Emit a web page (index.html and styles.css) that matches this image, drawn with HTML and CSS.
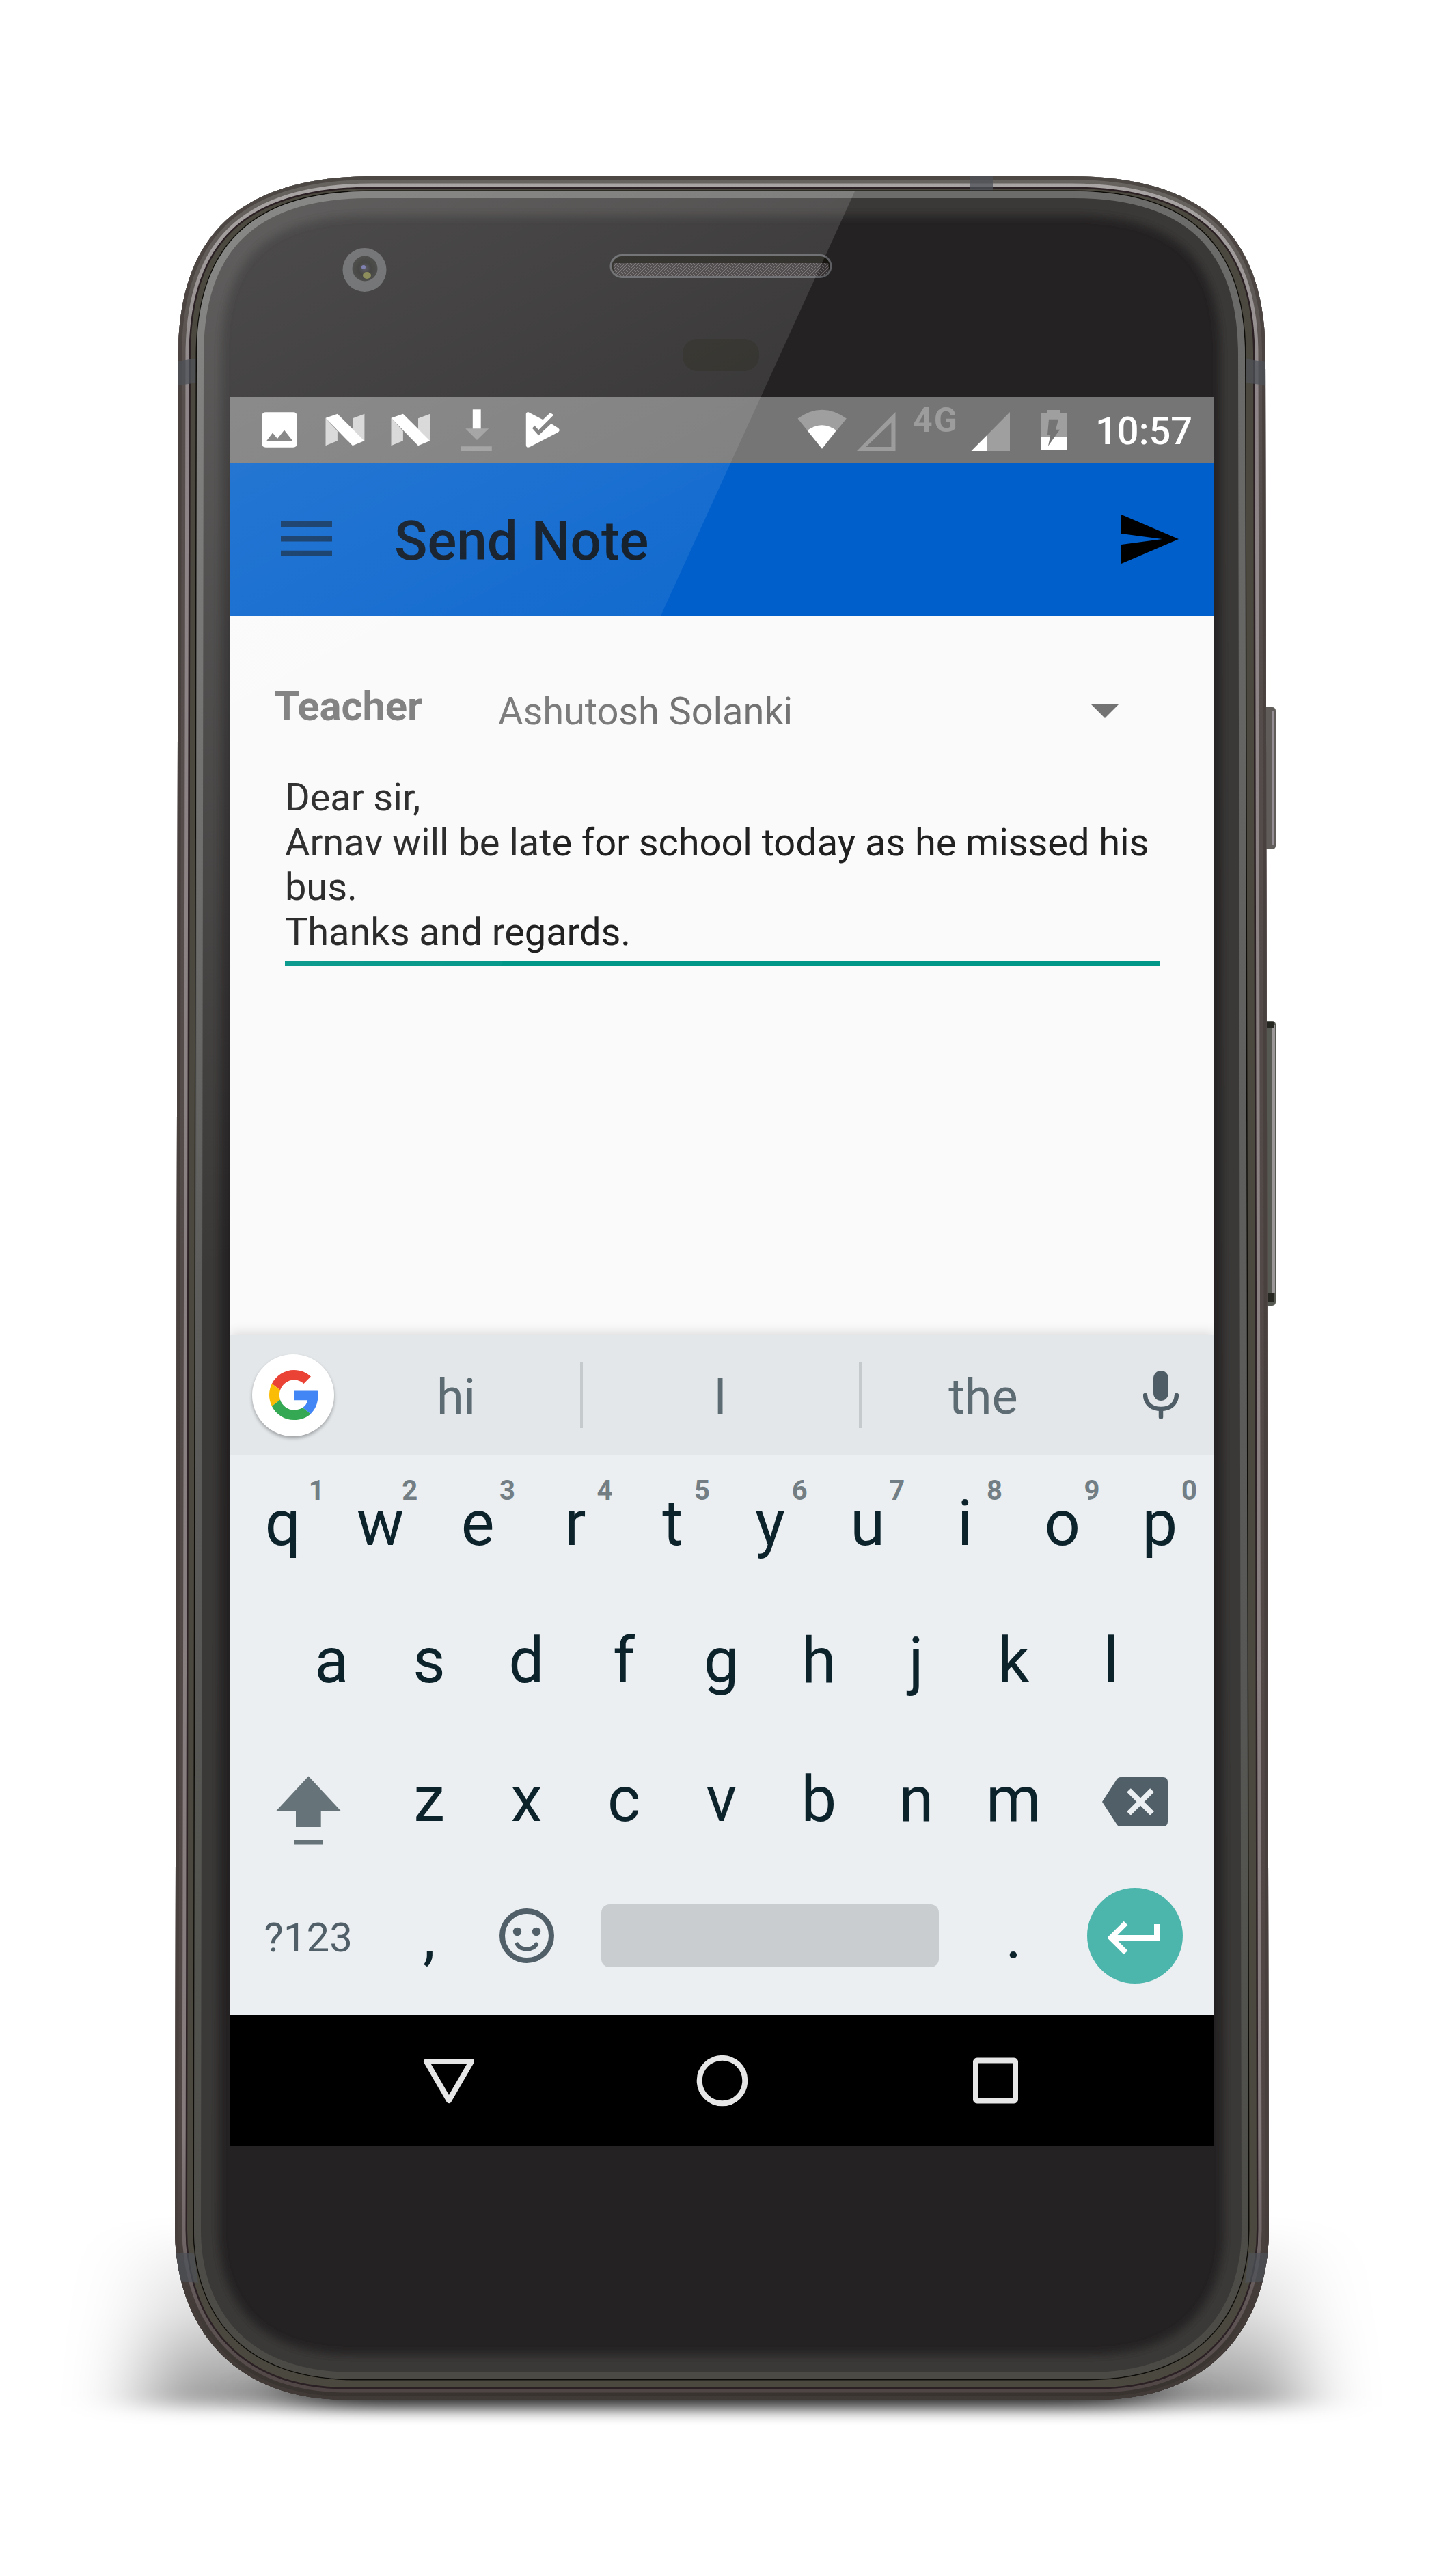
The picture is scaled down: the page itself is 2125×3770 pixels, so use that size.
FILE: index.html
```html
<!DOCTYPE html>
<html lang="en">
<head>
<meta charset="utf-8">
<title>Send Note</title>
<link rel="stylesheet" href="styles.css">
</head>
<body>
<div class="stage">
  <svg class="device" viewBox="0 0 2125 3770" aria-hidden="true">
    <defs>
      <path id="outer" d="M261 520C261 350 345 258 545 258H1568C1768 258 1852 350 1852 520L1857 3263C1857 3385 1790 3512 1605 3512H508C323 3512 256 3385 256 3263Z"/>
      <path id="glass" d="M288 520C288 380 350 280 540 280H1571C1761 280 1822 380 1822 520L1827 3263C1827 3370 1771 3482 1591 3482H520C340 3482 284 3370 284 3263Z"/>
      <clipPath id="outerClip"><use href="#outer"/></clipPath>
      <clipPath id="glassClip"><use href="#glass"/></clipPath>
      <filter id="wide" x="-20%" y="-60%" width="140%" height="220%"><feGaussianBlur stdDeviation="56 12"/></filter>
      <filter id="near" x="-20%" y="-200%" width="140%" height="500%"><feGaussianBlur stdDeviation="60 12"/></filter>
      <filter id="soft" x="-5%" y="-5%" width="110%" height="110%"><feGaussianBlur stdDeviation="7"/></filter>
      <linearGradient id="shade" x1="0" y1="0" x2="0" y2="1"><stop offset="0" stop-opacity="0"/><stop offset=".5" stop-opacity=".14"/><stop offset="1" stop-opacity=".42"/></linearGradient>
      <linearGradient id="ridge" x1="0" y1="0" x2="0" y2="1"><stop offset="0" stop-color="#6c6c6a"/><stop offset=".6" stop-color="#5a5b59"/><stop offset="1" stop-color="#4b4a45"/></linearGradient>
      <linearGradient id="rim" x1="0" y1="0" x2="0" y2="1"><stop offset="0" stop-color="#aaa6a5"/><stop offset=".1" stop-color="#8d8587"/><stop offset=".88" stop-color="#857b7c"/><stop offset="1" stop-color="#4e4444"/></linearGradient>
      <linearGradient id="edge" x1="0" y1="0" x2="0" y2="1"><stop offset="0" stop-color="#67635f"/><stop offset=".1" stop-color="#564e4c"/><stop offset=".9" stop-color="#4f4644"/><stop offset="1" stop-color="#38332e"/></linearGradient>
      <radialGradient id="lens"><stop offset="0" stop-color="#3d3c48"/><stop offset=".5" stop-color="#22221f"/><stop offset="1" stop-color="#2c2c2a"/></radialGradient>
      <pattern id="mesh" width="4" height="4" patternUnits="userSpaceOnUse"><rect width="4" height="4" fill="#3a3536"/><path d="M0 4L4 0" stroke="#6b6566"/></pattern>
    </defs>
    <rect x="215" y="3250" width="1683" height="272" fill="url(#shade)" filter="url(#wide)"/>
    <rect x="440" y="3480" width="1233" height="42" fill="#000" opacity=".75" filter="url(#near)"/>
    <g>
      <rect x="1848" y="1035" width="19" height="208" rx="5" fill="#5f5c5a"/>
      <rect x="1861" y="1040" width="4" height="196" fill="#958e95"/>
      <rect x="1848" y="1494" width="19" height="417" rx="5" fill="#565852"/>
      <rect x="1862" y="1500" width="4" height="392" fill="#9b9799"/>
      <path d="M1853 1496h12v9h-12zM1853 1893h12v12h-12z" fill="#24261f"/>
    </g>
    <g clip-path="url(#outerClip)">
      <use href="#outer" fill="#4b483f"/>
      <use href="#outer" fill="none" stroke="#2b2023" stroke-width="36"/>
      <use href="#outer" fill="none" stroke="url(#rim)" stroke-width="31"/>
      <use href="#outer" fill="none" stroke="url(#edge)" stroke-width="21"/>
      <use href="#outer" fill="none" stroke="#453d3b" stroke-opacity=".7" stroke-width="10"/>
      <g fill="#4d5258" opacity=".75">
        <path d="M255 530l34-6v36l-34 5zM1821 525l40 6v34l-40-5zM1420 255h33v26h-33zM250 3297h34l6 44-40-4zM1864 3297h-36l-6 44 42-4z"/>
      </g>
    </g>
    <use href="#glass" fill="#242222" stroke="#0d0c08" stroke-width="3"/>
    <g clip-path="url(#glassClip)">
      <use href="#glass" fill="none" stroke="#3a3937" stroke-width="72" filter="url(#soft)"/>
      <use href="#glass" fill="none" stroke="url(#ridge)" stroke-width="20"/>
    </g>
    <circle cx="533.5" cy="395" r="32" fill="#5b5c5e"/>
    <circle cx="534" cy="393" r="18.5" fill="url(#lens)"/>
    <circle cx="532" cy="391" r="3" fill="#6668a0"/>
    <ellipse cx="537" cy="403" rx="6" ry="5" fill="#77783c"/>
    <rect x="894" y="373.500" width="322" height="32" rx="16" fill="#17150f" stroke="#5d5e61" stroke-width="3"/>
    <path d="M898 385H1212Q1216 404 1200 404H910Q896 404 898 385Z" fill="url(#mesh)"/>
    <rect x="999" y="496" width="112" height="47" rx="22" fill="#1e1d18"/>
  </svg>

  <main class="screen">
    <header class="status">
      <svg class="st-photo" viewBox="383 594 52 70"><path fill="#fff" fill-rule="evenodd" d="M389 603.300H429Q434.700 603.300 434.700 609V649Q434.700 654.700 429 654.700H389Q383.300 654.700 383.300 649V609Q383.300 603.300 389 603.300ZM389.500 646H429L416 629.500 406 642 399 633.500Z"/></svg>
      <svg class="st-n" viewBox="476 594 58 70"><path fill="#d4d4d4" d="M476.500 611.700L493.900 631V645L476.500 652.300ZM516 612.300L533.400 605.700V645L516 628Z"/><path fill="#fff" d="M476.500 611.700L493.900 605.700 533.400 645 516 652.300Z"/></svg>
      <svg class="st-n st-n2" viewBox="476 594 58 70"><path fill="#d4d4d4" d="M476.500 611.700L493.900 631V645L476.500 652.300ZM516 612.300L533.400 605.700V645L516 628Z"/><path fill="#fff" d="M476.500 611.700L493.900 605.700 533.400 645 516 652.300Z"/></svg>
      <svg class="st-dl" viewBox="674 594 46 70"><path fill="#999" d="M681.200 627.300H715.200L698 644ZM674.800 653.300H719.800V660H674.800Z"/><path fill="#fff" d="M691.800 599.300H703.700V627.300H691.800Z"/></svg>
      <svg class="st-play" viewBox="769 594 51 70"><path fill="#fff" d="M769.800 606Q770 602.500 773.500 603.300L794.600 614.300 805.200 604 810.300 607.300 788.200 629.300 782.300 622.700 779 626.700 788.200 637.300 806.600 620 817 626.500Q820.500 629.300 817 632.500L775.500 654Q770 656.500 769.800 651Z"/></svg>
      <svg class="st-wifi" viewBox="1167 594 72 70"><path fill="#9f9f9f" d="M1167.500 612.500Q1203 587 1238.800 612.500L1203 656.700Z"/><path fill="#fff" d="M1181.500 630Q1203 614.500 1223.900 630L1203 656.700Z"/></svg>
      <svg class="st-sig" viewBox="1253 594 58 70"><path fill="#9c9c9c" fill-rule="evenodd" d="M1310.500 603V660H1254ZM1304.400 618.500L1267.500 654H1304.400Z"/></svg>
      <span class="st-net">4G</span>
      <svg class="st-sig2" viewBox="1421 594 58 70"><path fill="#9f9f9f" d="M1478 603V660H1421.500Z"/><path fill="#fff" d="M1445 636.400V660H1421.500Z"/></svg>
      <svg class="st-bat" viewBox="1523 594 39 70"><path fill="#9f9f9f" d="M1533 600H1551.500V605H1561V640H1523.700V605H1533Z"/><path fill="#fff" d="M1523.700 640H1561V658.600H1523.700Z"/><path fill="#747474" d="M1535 613.700H1549L1545 628.700H1551L1534 652.700 1537.500 636H1533Z"/></svg>
      <span class="st-time">10:57</span>
    </header>

    <nav class="appbar">
      <svg class="menu" viewBox="0 0 75 51"><path d="M0 0H75V8H0ZM0 21.400H75V29.400H0ZM0 42.700H75V50.700H0Z"/></svg>
      <h1 class="title">Send Note</h1>
      <svg class="send" viewBox="0 0 24 24"><path d="M2.010 21L23 12 2.010 3 2 10l15 2-15 2z"/></svg>
    </nav>

    <section class="content">
      <div class="recipient">
        <span class="label">Teacher</span>
        <span class="value">Ashutosh Solanki</span>
        <svg class="caret" viewBox="0 0 40 20"><path d="M0 0H40L20 20Z"/></svg>
      </div>
      <div class="note">Dear sir,<br>Arnav will be late for school today as he missed his<br>bus.<br>Thanks and regards.</div>
    </section>

    <section class="keyboard">
      <div class="suggest">
        <span class="google"><svg viewBox="0 0 48 48"><path fill="#EA4335" d="M24 9.500c3.540 0 6.710 1.220 9.210 3.600l6.850-6.850C35.900 2.380 30.470 0 24 0 14.620 0 6.510 5.380 2.560 13.220l7.980 6.190C12.430 13.720 17.740 9.500 24 9.500z"/><path fill="#4285F4" d="M46.980 24.550c0-1.570-.15-3.090-.38-4.550H24v9.020h12.940c-.58 2.960-2.260 5.480-4.780 7.180l7.730 6c4.510-4.180 7.090-10.360 7.090-17.650z"/><path fill="#FBBC05" d="M10.530 28.590c-.48-1.450-.76-2.990-.76-4.590s.27-3.140.76-4.590l-7.980-6.190C.92 16.460 0 20.120 0 24c0 3.880.92 7.540 2.560 10.780l7.970-6.190z"/><path fill="#34A853" d="M24 48c6.480 0 11.930-2.130 15.890-5.810l-7.730-6c-2.150 1.450-4.920 2.300-8.160 2.300-6.260 0-11.570-4.220-13.470-9.910l-7.980 6.190C6.510 42.620 14.620 48 24 48z"/></svg></span>
        <span class="word w1">hi</span><i class="sep"></i>
        <span class="word w2">I</span><i class="sep"></i>
        <span class="word w3">the</span>
        <svg class="mic" viewBox="0 0 52 71"><rect x="15" y="0" width="22" height="44" rx="11" fill="#4f5e66"/><path d="M3 36C4 50 14 56 26 56S48 50 49 36M26 58V67.500" fill="none" stroke="#4f5e66" stroke-width="6.500" stroke-linecap="round"/></svg>
      </div>
      <div class="keys">
        <div class="row">
          <span class="key first">q<sup>1</sup></span><span class="key">w<sup>2</sup></span><span class="key">e<sup>3</sup></span><span class="key">r<sup>4</sup></span><span class="key">t<sup>5</sup></span><span class="key">y<sup>6</sup></span><span class="key">u<sup>7</sup></span><span class="key">i<sup>8</sup></span><span class="key">o<sup>9</sup></span><span class="key">p<sup>0</sup></span>
        </div>
        <div class="row">
          <span class="key">a</span><span class="key">s</span><span class="key">d</span><span class="key">f</span><span class="key">g</span><span class="key">h</span><span class="key">j</span><span class="key">k</span><span class="key">l</span>
        </div>
        <div class="row low">
          <span class="key wide"><svg class="shift" viewBox="404 2599 95 101"><path d="M451.500 2599.400L499 2650.400H469.700V2674H433V2650.400H404ZM430 2693H473V2699.400H430Z"/></svg></span><span class="key">z</span><span class="key">x</span><span class="key">c</span><span class="key">v</span><span class="key">b</span><span class="key">n</span><span class="key">m</span><span class="key wide"><svg class="back" viewBox="0 0 96 72"><path fill="#505f68" d="M27 0H89Q96 0 96 7V65Q96 72 89 72H27Q23 72 21 68.500L0 36 21 3.500Q23 0 27 0Z"/><path d="M39 19L73 53M73 19L39 53" stroke="#ebeff2" stroke-width="8"/></svg></span>
        </div>
        <div class="row">
          <span class="key wide sym">?123</span><span class="key">,</span><span class="key"><svg class="smile" viewBox="0 0 80 80"><circle cx="40" cy="40" r="36" fill="none" stroke="#505f68" stroke-width="8"/><circle cx="26" cy="34" r="6.200" fill="#505f68"/><circle cx="54" cy="34" r="6.200" fill="#505f68"/><path d="M26 52.500Q30 59.500 40 59.500T54 52.500" fill="none" stroke="#505f68" stroke-width="6" stroke-linecap="round"/></svg></span><span class="key space"><i></i></span><span class="key">.</span><span class="key wide"><span class="enter"><svg viewBox="0 0 76 50"><path d="M72 5V25H6M26.500 3.500L5 25 26.500 46.500" fill="none" stroke="#fff" stroke-width="8"/></svg></span></span>
        </div>
      </div>
    </section>

    <footer class="navbar">
      <svg viewBox="0 0 76 76"><path d="M5 10H71L38 67Z" fill="none" stroke="#e6e6e6" stroke-width="8" stroke-linejoin="round"/></svg>
      <svg viewBox="0 0 76 76"><circle cx="38" cy="38" r="33.300" fill="none" stroke="#e6e6e6" stroke-width="8"/></svg>
      <svg viewBox="0 0 76 76"><rect x="9" y="8.500" width="58" height="59" rx="2" fill="none" stroke="#e6e6e6" stroke-width="8"/></svg>
    </footer>
  </main>

  <svg class="gloss" viewBox="0 0 2125 3770" aria-hidden="true">
    <defs><linearGradient id="sheen" gradientUnits="userSpaceOnUse" x1="288" y1="280" x2="944" y2="1529"><stop offset="0" stop-color="#fff" stop-opacity=".195"/><stop offset="1" stop-color="#fff" stop-opacity="0"/></linearGradient>
    <clipPath id="glossClip"><path d="M288 520C288 380 350 280 540 280H1251L288 2386Z"/></clipPath></defs>
    <rect x="280" y="270" width="980" height="2120" fill="url(#sheen)" clip-path="url(#glossClip)"/>
  </svg>
</div>
</body>
</html>
```

FILE: styles.css
```css
* { box-sizing: border-box; }

body {
  margin: 0;
  background: #fff;
  font-family: Roboto, "Liberation Sans", sans-serif;
}

svg { display: block; flex: none; }

.stage {
  position: relative;
  width: 2125px;
  height: 3770px;
  padding: 581px 348px 0 337px;
  overflow: hidden;
}

/* Phone body behind the screen, glass reflection over it */
.device, .gloss {
  position: absolute;
  top: 0;
  left: 0;
  width: 2125px;
  height: 3770px;
}
.gloss { pointer-events: none; }

.screen {
  position: relative;
  display: flex;
  flex-direction: column;
  width: 1440px;
  height: 2560px;
  background: #fafafa;
}

/* Status bar */
.status {
  display: flex;
  align-items: center;
  height: 96px;
  padding-left: 46px;
  background: #757575;
  white-space: nowrap;
}
.status svg { height: 70px; }
.st-photo { width: 52px; }
.st-n { width: 58px; margin-left: 41px; }
.st-n2 { margin-left: 38px; }
.st-dl { width: 46px; margin-left: 44px; }
.st-play { width: 51px; margin-left: 49px; }
.st-wifi { width: 72px; margin-left: 347px; }
.st-sig { width: 58px; margin-left: 14px; }
.st-net {
  width: 67px;
  margin: 0 18px 28px 25px;
  color: #9c9c9c;
  font-size: 50px;
  font-weight: 700;
  line-height: 58px;
  letter-spacing: 2px;
}
.st-sig2 { width: 58px; }
.st-bat { width: 39px; margin-left: 44px; }
.st-time {
  margin-left: 41px;
  padding-top: 3px;
  color: #fff;
  font-size: 56px;
  font-weight: 500;
}

/* App bar */
.appbar {
  display: flex;
  align-items: center;
  height: 224px;
  padding: 0 48px 0 74px;
  background: #005fcb;
}
.menu { width: 75px; height: 51px; margin-bottom: 2px; fill: #002b5d; }
.title {
  flex: 1;
  margin: 0 0 0 91px;
  padding-top: 5px;
  color: #000c1a;
  font-size: 80px;
  font-weight: 500;
}
.send { width: 96px; height: 96px; }

/* Form */
.content { height: 1053px; padding: 68px 80px 0 64px; }
.recipient {
  display: flex;
  align-items: center;
  height: 144px;
  color: #737373;
}
.label {
  width: 328px;
  margin-bottom: 16px;
  color: #777;
  font-size: 60px;
  font-weight: 700;
  letter-spacing: -.2px;
}
.value { flex: 1; font-size: 56px; letter-spacing: -.1px; }
.caret { width: 40px; height: 20px; margin-right: 60px; fill: #737373; }
.note {
  margin: 22px 0 0 16px;
  padding-bottom: 9px;
  border-bottom: 8px solid #009688;
  color: #212121;
  font-size: 56px;
  line-height: 65.500px;
  letter-spacing: -.08px;
  white-space: nowrap;
}

/* Keyboard */
.keyboard {
  height: 995px;
  background: #ebeff2;
  box-shadow: 0 -4px 16px rgba(0, 0, 0, .12);
  clip-path: inset(-24px 0 0 0);
}
.suggest {
  display: flex;
  align-items: center;
  height: 175px;
  padding-left: 32px;
  background: #e3e7ea;
}
.google {
  display: flex;
  align-items: center;
  justify-content: center;
  width: 120px;
  height: 120px;
  border-radius: 50%;
  background: #fff;
  box-shadow: 0 3px 5px rgba(0, 0, 0, .3);
}
.google svg { width: 73px; height: 73px; margin-left: 2px; }
.word {
  color: #5d6b73;
  font-size: 72px;
  text-align: center;
  padding-top: 5px;
}
.w1 { width: 360px; padding-right: 3px; }
.w2 { width: 404px; padding-right: 2px; }
.w3 { width: 356px; }
.sep { width: 4px; height: 96px; background: #c5cacd; }
.mic { width: 52px; height: 71px; margin-left: 56px; }
.keys { padding: 0 0 15px 5.700px; }
.row {
  display: flex;
  justify-content: center;
  width: 1426px;
  height: 201.250px;
}
.low .key { padding-top: 3px; }
.key {
  position: relative;
  display: flex;
  align-items: center;
  justify-content: center;
  width: 142.600px;
  color: #0d232c;
  font-size: 92px;
}
.key sup {
  position: absolute;
  left: 103px;
  top: 29px;
  color: #727e84;
  font-size: 40px;
  font-weight: 700;
  line-height: 47px;
}
.first sup { left: 109px; }
.wide { width: 214px; }
.sym { padding: 4px 0 0 3px; color: #505f68; font-size: 60px; }
.shift { width: 95px; height: 101px; margin: 31px 0 0 3px; fill: #66747a; }
.back { width: 96px; height: 72px; margin: 6px 2px 0 0; }
.smile { width: 80px; height: 80px; }
.space { width: 570.400px; }
.space i {
  width: 494px;
  height: 92px;
  border-radius: 12px;
  background: #c9cdd0;
}
.enter {
  display: flex;
  align-items: center;
  justify-content: center;
  width: 140px;
  height: 140px;
  margin-right: 2px;
  border-radius: 50%;
  background: #4db6ac;
}
.enter svg { width: 76px; height: 50px; margin: 6px 3px 0 0; }

/* System navigation */
.navbar {
  display: flex;
  align-items: center;
  justify-content: center;
  gap: 324px;
  height: 192px;
  background: #000;
}
.navbar svg { width: 76px; height: 76px; }
```
